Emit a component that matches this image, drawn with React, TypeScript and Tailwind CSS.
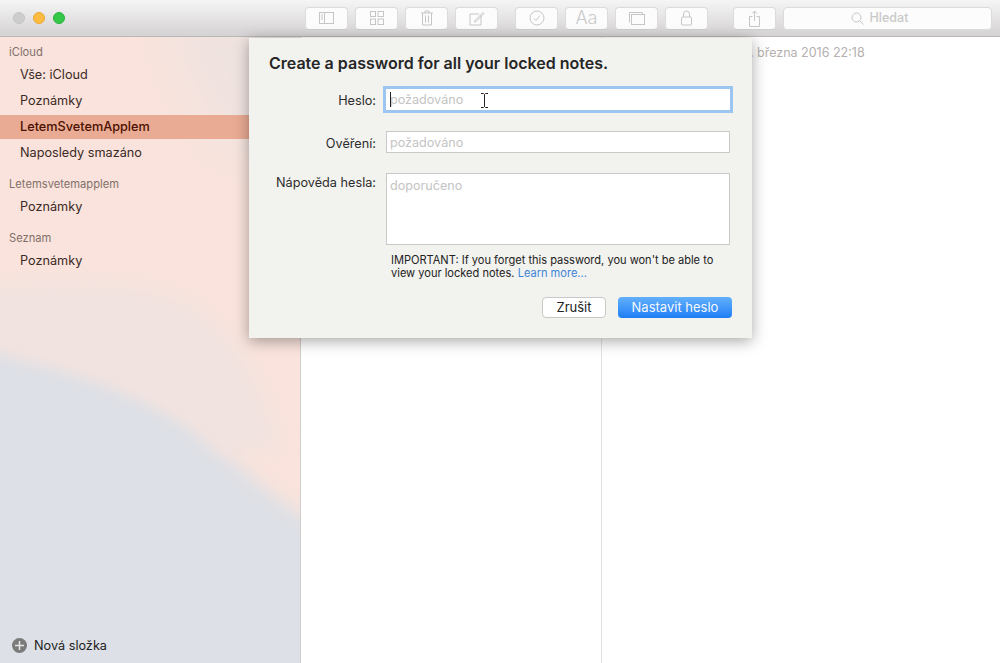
const font = { fontFamily: '"Inter", "Liberation Sans", sans-serif' };

function TB({ w = 'w-[43px]', children }: { w?: string; children?: React.ReactNode }) {
  return (
    <div className={`${w} h-[23px] rounded-[4px] bg-[#fcfcfc] border border-[#dcdbdb] border-b-[#cfcece] flex items-center justify-center text-[#c4c4c4]`}>
      {children}
    </div>
  );
}

const S = { fill: 'none', stroke: '#c6c6c6', strokeWidth: 1 };

function Row({ children }: { children: React.ReactNode }) {
  return <div className="h-[26px] flex items-center pl-[20px] text-[12.7px] text-[#3c2a26]">{children}</div>;
}

function Head({ children, cls }: { children: React.ReactNode; cls: string }) {
  return <div className={`pl-[9px] text-[11.2px] text-[#83706a] leading-[14px] ${cls}`}>{children}</div>;
}

function Label({ children, cls = '' }: { children: React.ReactNode; cls?: string }) {
  return <div className={`w-[127px] text-right text-[12.7px] text-[#2c2c2c] ${cls}`}>{children}</div>;
}

export default function App() {
  return (
    <div className="relative w-[1000px] h-[663px] overflow-hidden bg-white flex flex-col" style={font}>
      <div className="h-[37px] shrink-0 flex items-center border-b border-[#b9b7b7] bg-gradient-to-b from-[#f6f5f5] to-[#d4d2d2]">
        <div className="flex gap-[8px] ml-[13px] w-[292px]">
          <div className="w-[12px] h-[12px] rounded-full bg-[#cdcdcd] border border-[#c4c4c4]" />
          <div className="w-[12px] h-[12px] rounded-full bg-[#fdbc40] border border-[#e8a838]" />
          <div className="w-[12px] h-[12px] rounded-full bg-[#34c748] border border-[#2bb03e]" />
        </div>
        <div className="flex gap-[7px]">
          <TB>
            <svg width="16" height="12" {...S}><rect x=".5" y=".5" width="14" height="11" /><path d="M5.500 .5v11M2 3h2M2 5h2M2 7h2" /></svg>
          </TB>
          <TB>
            <svg width="14" height="14" {...S}><rect x=".5" y=".5" width="5" height="5" /><rect x="8" y=".5" width="5.500" height="5" /><rect x=".5" y="8" width="5" height="5.500" /><rect x="8" y="8" width="5.500" height="5.500" /></svg>
          </TB>
          <TB>
            <svg width="14" height="16" {...S}><path d="M1 3h12M5 3V1h4v2M2.500 3v12h9V3M5.500 5.500v7M8.500 5.500v7" /></svg>
          </TB>
          <TB>
            <svg width="16" height="15" {...S}><path d="M12 4.500v9.500H1V3h9" /><path d="M6 9.500l8-8 1 1-8 8-1.500.5z" /></svg>
          </TB>
        </div>
        <div className="flex gap-[7px] ml-[17px]">
          <TB>
            <svg width="16" height="16" {...S}><circle cx="8" cy="8" r="7" /><path d="M5 8.500l2 2 4-5" /></svg>
          </TB>
          <TB><span className="text-[18px] leading-none font-light text-[#cacaca]">Aa</span></TB>
          <TB>
            <svg width="16" height="13" {...S}><rect x="2.500" y="2.500" width="13" height="10" /><path d="M.5 10.500V.5h13v2" /></svg>
          </TB>
          <TB>
            <svg width="12" height="16" {...S}><rect x=".5" y="7" width="10" height="8" rx="1" /><path d="M2.500 7V4a3 3 0 016 0v3" /></svg>
          </TB>
        </div>
        <div className="flex gap-[7px] ml-[25px]">
          <TB>
            <svg width="12" height="17" {...S}><path d="M3.500 6.500H.5v10h10v-10H7.500M5.500 11V1M3 3.500L5.500 1 8 3.500" /></svg>
          </TB>
          <div className="w-[209px] h-[23px] rounded-[4px] bg-[#fcfcfc] border border-[#dcdbdb] flex items-center justify-center gap-[6px] pr-[16px] text-[12.5px] font-medium text-[#c9c9c9]">
            <svg width="13" height="13" {...S}><circle cx="5.500" cy="5.500" r="4.500" /><path d="M9 9l3.500 3.500" /></svg>
            Hledat
          </div>
        </div>
      </div>

      <div className="flex flex-1 min-h-0">
        <div className="w-[301px] shrink-0 border-r border-[#d2cdcb] relative overflow-hidden bg-[#dde0e6]">
          <svg className="absolute left-0 top-0" width="300" height="626">
            <defs>
              <filter id="soft" x="-20%" y="-20%" width="140%" height="140%"><feGaussianBlur stdDeviation="9" /></filter>
              <filter id="soft2" x="-30%" y="-30%" width="160%" height="160%"><feGaussianBlur stdDeviation="22" /></filter>
            </defs>
            <path d="M-40 -40H340V500C300 480 260 450 220 410C180 370 110 335 -40 300Z" fill="#f9e3dc" filter="url(#soft)" />
            <path d="M-40 250C40 245 100 240 160 255C220 270 260 330 280 410L225 420C180 370 110 335 -40 305Z" fill="#f1e3e0" filter="url(#soft)" />
            <path d="M170 -30H330V110H230C200 70 180 30 170 -30Z" fill="#efe3e0" filter="url(#soft2)" />
          </svg>
          <div className="relative flex flex-col h-full pt-[8px]">
            <Head cls="mb-[3px]">iCloud</Head>
            <Row>Vše: iCloud</Row>
            <Row>Poznámky</Row>
            <div className="h-[24px] my-px flex items-center pl-[20px] text-[12.7px] font-medium text-[#4a0f00] bg-[#e9ab93]">LetemSvetemApplem</div>
            <Row>Naposledy smazáno</Row>
            <Head cls="mt-[11px] mb-[3px]">Letemsvetemapplem</Head>
            <Row>Poznámky</Row>
            <Head cls="mt-[11px] mb-[3px]">Seznam</Head>
            <Row>Poznámky</Row>
            <div className="mt-auto mb-[8px] ml-[12px] flex items-center gap-[7px] text-[12.7px] text-[#222]">
              <div className="w-[15px] h-[15px] rounded-full bg-[#7b7b7b] flex items-center justify-center">
                <svg width="9" height="9" stroke="#e4e4e4" strokeWidth="1.500"><path d="M4.500 0v9M0 4.500h9" /></svg>
              </div>
              Nová složka
            </div>
          </div>
        </div>
        <div className="w-[301px] shrink-0 border-r border-[#e3e3e3]" />
        <div className="flex-1 pt-[8px] text-center text-[12.5px] leading-[15px] text-[#b5b0ae]">13. března 2016 22:18</div>
      </div>

      <div className="absolute left-[249px] top-[38px] w-[503px] h-[300px] bg-[#f2f2ef] shadow-[0_3px_14px_rgba(0,0,0,0.35)] pt-[15px] pr-[22px] flex flex-col">
        <div className="ml-[20px] text-[16px] leading-[20px] font-semibold text-[#262626]">Create a password for all your locked notes.</div>
        <div className="flex mt-[16px] items-start">
          <Label cls="mt-[2px]">Heslo:</Label>
          <div className="relative ml-[10px] w-[344px] h-[21px] bg-white outline-[3px] outline-[#9cc5f2] flex items-center pt-[1px] pl-[4px] text-[12.6px] text-[#c4c4c4]">
            <span className="absolute left-[4px] top-[3px] w-px h-[15px] bg-[#222]" />požadováno
            <svg className="absolute left-[95px] top-[4px]" width="7" height="15" fill="none" stroke="#222" strokeWidth="1"><path d="M0 .5h2.500L3.500 1.500 4.500 .5H7M3.500 1.500v12M0 14.500h2.500l1-1 1 1H7" /></svg>
          </div>
        </div>
        <div className="flex mt-[21px] items-start">
          <Label cls="mt-[3px]">Ověření:</Label>
          <div className="ml-[10px] w-[344px] h-[22px] bg-white border border-[#c9c9c7] flex items-center pt-[3px] pl-[3px] text-[12.6px] text-[#c4c4c4]">požadováno</div>
        </div>
        <div className="flex mt-[20px] items-start">
          <Label>Nápověda hesla:</Label>
          <div className="ml-[10px] w-[344px] h-[72px] bg-white border border-[#c9c9c7] pl-[3px] pt-[3px] text-[12.6px] leading-[18px] text-[#c4c4c4]">doporučeno</div>
        </div>
        <div className="ml-[142px] mt-[9px] text-[11.05px] leading-[13px] text-[#222] w-[340px]">
          IMPORTANT: If you forget this password, you won't be able to view your locked notes. <span className="text-[#3d85d8]">Learn more...</span>
        </div>
        <div className="flex justify-end gap-[12px] mt-[17px] -mr-[2px]">
          <div className="w-[64px] h-[21px] rounded-[4px] bg-white border border-[#c8c8c8] flex items-center justify-center text-[13px] text-[#222]">Zrušit</div>
          <div className="w-[114px] h-[21px] rounded-[4px] bg-gradient-to-b from-[#62b0fb] to-[#1a7ef5] flex items-center justify-center text-[13px] text-[#f4f8ff]">Nastavit heslo</div>
        </div>
      </div>
    </div>
  );
}
